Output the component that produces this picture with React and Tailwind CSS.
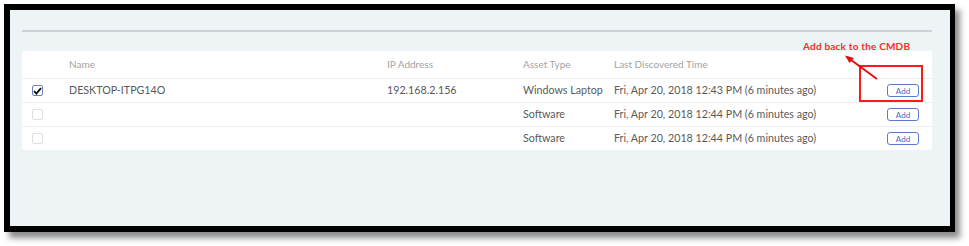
import React from 'react';

const rows = [
    { checked: true, name: 'DESKTOP-ITPG14O', ip: '192.168.2.156', type: 'Windows Laptop', time: 'Fri, Apr 20, 2018 12:43 PM (6 minutes ago)' },
    { checked: false, name: '', ip: '', type: 'Software', time: 'Fri, Apr 20, 2018 12:44 PM (6 minutes ago)' },
    { checked: false, name: '', ip: '', type: 'Software', time: 'Fri, Apr 20, 2018 12:44 PM (6 minutes ago)' },
];

const Checkbox = ({ checked }) => {
    if (checked) {
        return (
            <span className="flex h-[11px] w-[11px] items-center justify-center rounded-[2px] border border-[#6f7fb8] bg-white">
                <svg width="9" height="8" viewBox="0 0 9 8">
                    <path d="M1 4.2 L3.4 6.6 L8 1.2" fill="none" stroke="#111" strokeWidth="1.8" />
                </svg>
            </span>
        );
    }
    return <span className="block h-[11px] w-[11px] rounded-[2px] border border-[#dcdfe2] bg-white" />;
};

const Row = ({ row }) => (
    <div className="flex h-[24px] items-center border-t border-[#eceff1] text-[10.7px] text-[#5a5a5a]">
        <div className="w-[47px] pl-[10px]">
            <Checkbox checked={row.checked} />
        </div>
        <div className="w-[318px]">{row.name}</div>
        <div className="w-[136px]">{row.ip}</div>
        <div className="w-[91px]">{row.type}</div>
        <div className="flex-1">{row.time}</div>
        <div className="pr-[13px]">
            <button className="flex h-[13px] w-[32px] items-center justify-center rounded-[3px] border border-[#5b7ccc] bg-white text-[8px] leading-none text-[#4b69b8]">
                Add
            </button>
        </div>
    </div>
);

export default function App() {
    return (
        <div className="h-[246px] w-[969px] bg-white pl-[4px] pt-[4px]" style={{ fontFamily: 'Lato, "Open Sans", sans-serif' }}>
            <div className="h-[228px] w-[951px] border-t-[6px] border-r-[5px] border-b-[6px] border-l-[6px] border-black shadow-[5px_6px_6px_rgba(0,0,0,0.45)]">
                <div className="relative h-full bg-[#eef3f6] pl-[12px] pr-[18px] pt-[20px]">
                    <div className="h-[2px] bg-[#cdd2d6]" />
                    <div className="mt-[19px] overflow-hidden rounded-[2px] bg-white">
                        <div className="flex h-[27px] items-center text-[10px] text-[#a3a3a3]">
                            <div className="w-[47px]" />
                            <div className="w-[318px]">Name</div>
                            <div className="w-[136px]">IP Address</div>
                            <div className="w-[91px]">Asset Type</div>
                            <div className="flex-1">Last Discovered Time</div>
                        </div>
                        {rows.map((row, i) => (
                            <Row key={i} row={row} />
                        ))}
                    </div>

                    {/* annotation */}
                    <div className="absolute left-[793px] top-[29px] text-[10px] font-bold tracking-[0.2px] text-[#ff2a2a]">
                        Add back to the CMDB
                    </div>
                    <div className="absolute left-[849px] top-[55px] h-[37px] w-[64px] border-2 border-[#ff1a1a]" />
                    <svg className="absolute left-[830px] top-[40px]" width="40" height="32" viewBox="0 0 40 32">
                        <path d="M37 29 L7 7" stroke="#e01010" strokeWidth="2" fill="none" />
                        <path d="M5 5.5 L14 8 L9.5 13 Z" fill="#e01010" />
                    </svg>
                </div>
            </div>
        </div>
    );
}
